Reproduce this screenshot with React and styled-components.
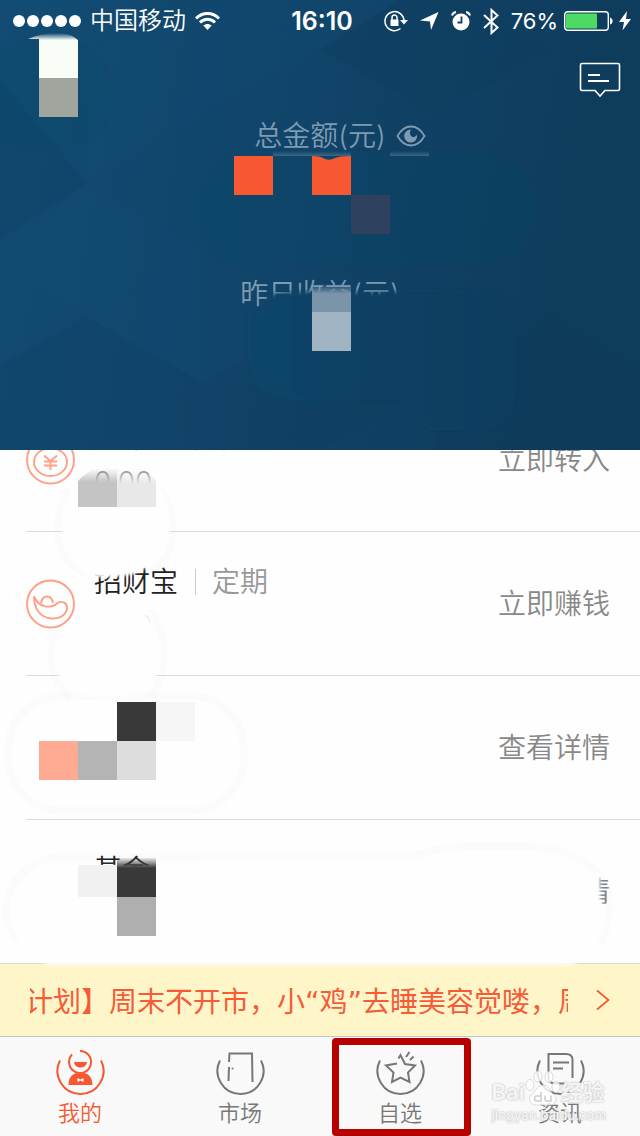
import React from 'react';
import styled, { createGlobalStyle } from 'styled-components';

const GlobalStyle = createGlobalStyle`
  * {
    box-sizing: border-box;
  }

  body {
    margin: 0;
    background: #fefefe;
    font-family: Inter, "Noto Sans CJK SC", sans-serif;
    font-weight: 350;
  }

  button {
    padding: 0;
    border: none;
    background: none;
    font: inherit;
    color: inherit;
    cursor: pointer;
  }
`;

// --- layout ---

const Page = styled.div`
  display: flex;
  flex-direction: column;
  min-height: 100vh;
  overflow: hidden;
`;

const Header = styled.header`
  position: relative;
  z-index: 2;
  min-height: 450px;
  overflow: hidden;
  background: linear-gradient(100deg, #124b73 0%, #114469 45%, #0e3c5d 85%);
`;

const Facets = styled.svg`
  position: absolute;
  inset: 0;
  width: 100%;
  height: 100%;
`;

const HeaderContent = styled.div`
  position: relative;
  display: flex;
  flex-direction: column;
`;

const Overlay = styled.svg`
  position: absolute;
  top: 0;
  left: 0;
  z-index: 1;
  overflow: visible;
  pointer-events: none;
`;

// --- status bar ---

const StatusBar = styled.div`
  display: grid;
  grid-template-columns: 1fr auto 1fr;
  align-items: center;
  height: 42px;
  padding: 0 9px 0 13px;
  color: #fff;
  font-size: 24px;
  line-height: 40px;
`;

const StatusGroup = styled.div`
  display: flex;
  align-items: center;
  justify-content: ${props => (props.$end ? 'flex-end' : 'flex-start')};
  gap: ${props => (props.$end ? '12px' : '9px')};
`;

const Signal = styled.div`
  display: flex;
  gap: 2px;
`;

const Dot = styled.span`
  width: 12px;
  height: 12px;
  border-radius: 50%;
  background: #fff;
`;

const Clock = styled.time`
  font-size: 25px;
  font-weight: 600;
`;

const Power = styled.div`
  display: flex;
  align-items: center;
  gap: 6px;
  font-size: 22px;
  font-weight: 400;
`;

const Toolbar = styled.div`
  display: flex;
  justify-content: flex-end;
  padding: 20px 19px 0;

  button,
  svg {
    display: block;
  }
`;

const Summary = styled.div`
  display: flex;
  flex-direction: column;
  gap: 118px;
  padding-top: 18px;
`;

const SummaryLabel = styled.div`
  display: grid;
  grid-template-columns: 1fr auto 1fr;
  align-items: center;
  column-gap: 10px;
  color: #7d9bb1;
  font-size: 28px;
  line-height: 40px;

  span {
    grid-column: 2;
  }

  button,
  svg {
    display: block;
  }
`;

// --- product list ---

const Products = styled.main`
  position: relative;
  z-index: 1;
  flex: 1;
`;

const Rows = styled.ul`
  margin: -62px 0 0;
  padding: 0 0 0 26px;
  list-style: none;
`;

const Row = styled.li`
  display: flex;
  align-items: center;
  box-sizing: content-box;
  height: 143px;
  padding-right: 30px;
  border-bottom: 1px solid #dcdcdc;
  font-size: 28px;
  line-height: 40px;

  &:last-child {
    border-bottom: none;
  }
`;

const RowIcon = styled.div`
  width: 50px;
  height: 50px;
  margin-right: 18px;
`;

const RowText = styled.div`
  flex: 1;
`;

const RowTitle = styled.div`
  display: flex;
  align-items: center;
  color: #222;
`;

const Kind = styled.span`
  display: flex;
  align-items: center;
  color: #999;

  &::before {
    content: '';
    width: 1px;
    height: 26px;
    margin: 0 16px 0 17px;
    background: #ccc;
  }
`;

const Amount = styled.div`
  min-height: 40px;
  margin-top: 4px;
  color: #888;
`;

const RowAction = styled.button`
  color: #888;
`;

// --- notice ---

const Notice = styled.a`
  display: flex;
  align-items: center;
  height: 74px;
  padding: 0 30px;
  border-top: 1px solid #dcdad0;
  border-bottom: 1px solid #c4c4c4;
  background: #fef6c9;
  color: #f65b38;
  font-size: 28px;
  text-decoration: none;
`;

const Ticker = styled.span`
  display: flex;
  flex: 1;
  overflow: hidden;
  margin-right: 28px;
  font-family: "DejaVu Sans", "Noto Sans CJK SC", sans-serif;
  font-weight: 400;
  white-space: nowrap;

  span {
    margin-left: -5px;
  }
`;

// --- tabs ---

const TabBar = styled.nav`
  position: relative;
  display: grid;
  grid-template-columns: repeat(4, 1fr);
  height: 99px;
  background: #f9f9f9;
`;

const Tab = styled.button`
  position: relative;
  display: flex;
  flex-direction: column;
  align-items: center;
  padding-top: 12px;
  color: ${props => (props.$active ? '#f65932' : '#777')};
  font-size: 22px;
  line-height: 32px;

  svg {
    display: block;
  }
`;

const Highlight = styled.span`
  position: absolute;
  inset: 1px 9px 0 12px;
  border: 7px solid #b70000;
  border-radius: 4px;
`;

const Watermark = styled.div`
  position: absolute;
  right: 34px;
  bottom: 12px;
  color: rgba(255, 255, 255, 0.85);
  font-weight: 700;
  text-shadow: 0 0 2px #bbb, 0 0 1px #ccc;
  pointer-events: none;
`;

const WatermarkBrand = styled.div`
  display: flex;
  align-items: flex-end;
  font-size: 22px;
  line-height: 28px;
`;

const WatermarkSite = styled.div`
  font-size: 13px;
  font-weight: 500;
  line-height: 18px;
`;

// --- icons ---

const WifiIcon = () => (
  <svg width="25" height="20" viewBox="0 0 25 20" fill="none" stroke="#fff" strokeWidth="3">
    <path d="M1 7.5C7.500 .8 17.500 .8 24 7.500" />
    <path d="M5 11.500C9.300 7.300 15.700 7.300 20 11.500" />
    <path d="M12.500 19L8.300 14.600C10.700 12.400 14.300 12.400 16.700 14.600Z" fill="#fff" stroke="none" />
  </svg>
);

const RotationLockIcon = () => (
  <svg width="24" height="22" viewBox="0 0 24 22" fill="none" stroke="#fff">
    <path d="M20 11A9.500 9.500 0 1 0 16.500 18.500" strokeWidth="1.500" />
    <path d="M16 10H24L20 14.500Z" fill="#fff" stroke="none" />
    <rect x="6.500" y="9.500" width="8" height="6.500" rx=".6" fill="#fff" stroke="none" />
    <path d="M8 10V7.600A2.500 2.500 0 0 1 13 7.600V10" strokeWidth="1.500" />
  </svg>
);

const LocationIcon = () => (
  <svg width="19" height="18" viewBox="0 0 19 18" fill="#fff">
    <path d="M18.500 0L11 18L10 9.500L0 8.500Z" />
  </svg>
);

const AlarmIcon = () => (
  <svg width="20" height="20" viewBox="0 0 20 20" fill="none">
    <circle cx="10" cy="11" r="8.500" fill="#fff" />
    <path d="M1 4.500A5 5 0 0 1 5 1M19 4.500A5 5 0 0 0 15 1" stroke="#fff" strokeWidth="2" />
    <path d="M10.500 5.500V11.500H6.500" stroke="#104263" strokeWidth="1.800" />
  </svg>
);

const BluetoothIcon = () => (
  <svg width="16" height="27" viewBox="0 0 16 27" fill="none" stroke="#fff" strokeWidth="2">
    <path d="M1 7L14.500 19.500L8.500 25V2L14.500 7.500L1 20" />
  </svg>
);

const BatteryIcon = () => (
  <svg width="49" height="20" viewBox="0 0 49 20" fill="none">
    <rect x=".7" y=".7" width="43.600" height="18.600" rx="3" stroke="#fff" strokeWidth="1.400" />
    <rect x="2" y="2.500" width="31" height="15" rx="1" fill="#4cd964" />
    <path d="M46 6.500C49.500 7.500 49.500 12.500 46 13.500Z" fill="#fff" />
  </svg>
);

const BoltIcon = () => (
  <svg width="12" height="20" viewBox="0 0 12 20" fill="#fff">
    <path d="M8 0L0 11H5L3.500 19.500L12 8H7Z" />
  </svg>
);

const MessageIcon = () => (
  <svg width="42" height="36" viewBox="0 0 42 36" fill="none" stroke="#fff" strokeWidth="1.600">
    <path d="M3 1.500H39Q40.500 1.500 40.500 3V27Q40.500 28.500 39 28.500H26L21 34L16 28.500H3Q1.500 28.500 1.500 27V3Q1.500 1.500 3 1.500Z" />
    <path d="M9 13H21M9 19H30" strokeWidth="2" />
  </svg>
);

const EyeIcon = () => (
  <svg width="30" height="24" viewBox="0 0 30 24" fill="none">
    <path d="M1.500 12C5.500 5 10 2.500 15 2.500S24.500 5 28.500 12C24.500 19 20 21.500 15 21.500S5.500 19 1.500 12Z" stroke="#7d9bb1" strokeWidth="1.800" />
    <path d="M15 5.500A6.500 6.500 0 1 0 21 10.500C20 13 16.500 14 15 12C13.500 10 13.800 7.500 15 5.500Z" fill="#7d9bb1" />
  </svg>
);

const CoinIcon = () => (
  <svg width="50" height="50" viewBox="0 0 50 50" fill="none" stroke="#ff9f85" strokeWidth="1.900">
    <circle cx="24.500" cy="25" r="23.500" />
    <ellipse cx="24.500" cy="27" rx="16.500" ry="14" />
    <path d="M18 20.500L24.500 26L31 20.500M24.500 26V35M18 26.500H31M18 30.500H31" />
  </svg>
);

const IngotIcon = () => (
  <svg width="50" height="50" viewBox="0 0 50 50" fill="none" stroke="#ff9f85" strokeWidth="1.900">
    <circle cx="24.500" cy="25" r="23.500" />
    <path d="M8 17.500C8 28 13 39 26 39.500C35 39.500 41 35 41 28.500C41 23.500 35.500 21.500 31.500 24C25 30 13 29 8 17.500Z" />
    <path d="M15 24C16 19 18.500 17.500 21 17.500S26 19 27 24" />
  </svg>
);

const TabArc = () => <path d="M4 11.500A23 23 0 1 0 45 11.500" />;

const MineIcon = () => (
  <svg width="49" height="48" viewBox="0 0 49 48" fill="none" stroke="currentColor" strokeWidth="2">
    <TabArc />
    <path d="M24 2A11 11 0 1 1 16 5.500" />
    <path d="M18 13H31A6.500 5.500 0 0 1 18 13Z" fill="currentColor" stroke="none" />
    <path d="M12.500 36C12.500 28 17 24.500 21 24Q24.500 25.500 28 24C32 24.500 36.500 28 36.500 36Z" fill="currentColor" stroke="none" />
    <path d="M21.500 29L24.500 30.500L27.500 29V33L24.500 31.500L21.500 33Z" fill="#fff" stroke="none" />
  </svg>
);

const MarketIcon = () => (
  <svg width="49" height="48" viewBox="0 0 49 48" fill="none" stroke="currentColor" strokeWidth="2">
    <TabArc />
    <path d="M13 13L13.500 4.500H36L36.500 33M13 18L12.500 32" />
    <circle cx="16.500" cy="19.500" r="1" fill="currentColor" stroke="none" />
  </svg>
);

const StarIcon = () => (
  <svg width="49" height="48" viewBox="0 0 49 48" fill="none" stroke="currentColor" strokeWidth="2">
    <TabArc />
    <path d="M22.500 9.500L24.500 6L29 15L39 16.500L32 23.500L33.500 33L24.500 28.500L16 33L17.500 23.500L10 16.500L21 14.500M30 8L33.500 3M34 11L37.500 7.500" />
  </svg>
);

const NewsIcon = () => (
  <svg width="49" height="48" viewBox="0 0 49 48" fill="none" stroke="currentColor" strokeWidth="2">
    <TabArc />
    <path d="M36.500 29V11Q36.500 5 30 5H12.500V29Q12.500 34 19 34.500H31M17 13.500H33M17 19.500H27" />
  </svg>
);

const ChevronIcon = () => (
  <svg width="14" height="22" viewBox="0 0 14 22" fill="none" stroke="#f65932" strokeWidth="1.700">
    <path d="M1 1.500L12.500 11L1 20.500" />
  </svg>
);

const PawIcon = () => (
  <svg width="36" height="36" viewBox="0 0 36 36" fill="#fff" fillOpacity=".8" stroke="#ccc" strokeWidth=".7">
    <ellipse cx="5" cy="15" rx="4" ry="5.500" />
    <ellipse cx="13" cy="6.500" rx="4" ry="5.500" />
    <ellipse cx="24" cy="7" rx="4" ry="5.500" />
    <ellipse cx="31" cy="17" rx="4" ry="5.500" />
    <path d="M18 15C12 16 10 22 6 25C3 29 5 35 11 35H25C31 35 33 29 29 25C25 22 24 15 18 15Z" />
    <path d="M16 22V31H11.500Q9.500 31 9.500 28.500T11.500 26H16M20 25.500V29Q20 31 22 31H26V25.500" fill="none" stroke="#ccc" strokeWidth="1.500" />
  </svg>
);

// --- data ---

const products = [
  { name: '余额宝', kind: '活期', amount: '0.00', action: '立即转入', icon: <CoinIcon /> },
  { name: '招财宝', kind: '定期', amount: '0.00', action: '立即赚钱', icon: <IngotIcon /> },
  { name: '', action: '查看详情' },
  { name: '基金', action: '查看详情' },
];

const tabs = [
  { label: '我的', icon: <MineIcon />, active: true },
  { label: '市场', icon: <MarketIcon /> },
  { label: '自选', icon: <StarIcon />, marked: true },
  { label: '资讯', icon: <NewsIcon /> },
];

// low-poly pattern behind the header
const HeaderFacets = () => (
  <Facets viewBox="0 0 640 450" preserveAspectRatio="none" aria-hidden="true">
    <g fill="#17567f" fillOpacity=".13">
      <path d="M0 0H175L87 48L0 20Z" />
      <path d="M87 48L202 113L87 183Z" />
      <path d="M202 113L320 50L240 0L87 48Z" />
      <path d="M87 183L202 250L87 317L0 262Z" />
      <path d="M202 250V383L87 317Z" />
      <path d="M320 50L400 0H240Z" />
    </g>
    <g fill="#0c3654" fillOpacity=".14">
      <path d="M0 365L87 317L202 383L87 450H0Z" />
      <path d="M202 383L320 450H87Z" />
      <path d="M320 50L436 113L550 50L460 0H400Z" />
      <path d="M320 317L436 383L320 450L202 383Z" />
      <path d="M436 383L550 317L640 370V450H436Z" />
      <path d="M0 80L87 183L0 240Z" />
    </g>
  </Facets>
);

// pixelated blocks that hide the private amounts
const HeaderMosaic = () => (
  <Overlay width="640" height="450" viewBox="0 0 640 450" aria-hidden="true">
    <defs>
      <filter id="soft" x="-20%" y="-20%" width="140%" height="140%">
        <feGaussianBlur stdDeviation="2" />
      </filter>
      <linearGradient id="patch" x1="0" y1="0" x2="1" y2="0">
        <stop offset="0" stopColor="#114569" />
        <stop offset="1" stopColor="#0e3d5e" />
      </linearGradient>
      <linearGradient id="fadeBlue" x1="0" y1="0" x2="0" y2="1">
        <stop offset="0" stopColor="#7a95aa" stopOpacity="0" />
        <stop offset=".35" stopColor="#7a95aa" />
      </linearGradient>
      <linearGradient id="fadeLine" x1="0" y1="0" x2="0" y2="1">
        <stop offset="0" stopColor="#5c809b" stopOpacity="0" />
        <stop offset="1" stopColor="#5c809b" stopOpacity=".6" />
      </linearGradient>
      <linearGradient id="fadeWhite" x1="0" y1="0" x2="0" y2="1">
        <stop offset="0" stopColor="#f8fdf8" stopOpacity="0" />
        <stop offset=".16" stopColor="#f8fdf8" />
      </linearGradient>
    </defs>
    <g fill="#0f4062" fillOpacity=".18" filter="url(#soft)">
      <rect x="-20" y="42" width="130" height="106" rx="50" />
      <rect x="190" y="153" width="346" height="112" rx="54" />
    </g>
    <path d="M268 310V296Q285 291 312 292H352Q385 294 406 290H470Q515 290 515 330V390Q515 430 475 430H430L400 400H300Q248 400 248 350V312Z" fill="url(#patch)" filter="url(#soft)" />
    <path d="M28 39Q40 33 60 33Q72 34 78 40V78H39V39Z" fill="url(#fadeWhite)" />
    <rect x="39" y="78" width="39" height="39" fill="#a0a59e" />
    <path d="M234 156H273V195H234Z" fill="#f65932" />
    <path d="M312 156Q321 156 325 159Q330 161 335 158Q339 156 351 156V195H312Z" fill="#f65932" />
    <path d="M273 151H351V156H273ZM390 151H429V156H390Z" fill="url(#fadeLine)" />
    <rect x="351" y="195" width="39" height="39" fill="#2e425f" />
    <rect x="312" y="284" width="39" height="28" fill="url(#fadeBlue)" />
    <rect x="312" y="312" width="39" height="39" fill="#a0b3c2" />
  </Overlay>
);

const ListMosaic = () => (
  <Overlay width="640" height="514" viewBox="0 450 640 514" aria-hidden="true">
    <defs>
      <filter id="smudge" x="-10%" y="-10%" width="120%" height="120%">
        <feGaussianBlur stdDeviation="1.500" />
      </filter>
      <linearGradient id="fadeGray" gradientUnits="userSpaceOnUse" x1="0" y1="468" x2="0" y2="482">
        <stop offset="0" stopColor="#c4c4c4" stopOpacity="0" />
        <stop offset="1" stopColor="#c4c4c4" />
      </linearGradient>
      <linearGradient id="fadeLight" gradientUnits="userSpaceOnUse" x1="0" y1="468" x2="0" y2="484">
        <stop offset="0" stopColor="#e8e8e8" stopOpacity="0" />
        <stop offset="1" stopColor="#e8e8e8" />
      </linearGradient>
      <linearGradient id="fadeDark" gradientUnits="userSpaceOnUse" x1="0" y1="857" x2="0" y2="868">
        <stop offset="0" stopColor="#393939" stopOpacity="0" />
        <stop offset="1" stopColor="#393939" />
      </linearGradient>
    </defs>
    {/* faint outlines around the wiped areas */}
    <g fill="none" stroke="#000" strokeOpacity=".01" strokeWidth="8">
      <path d="M70 490Q56 510 58 535Q62 565 88 574M160 490Q174 510 173 530Q172 560 148 574" />
      <path d="M70 612Q51 635 51 655Q51 680 70 697M150 610Q164 630 164 655Q164 680 150 697" />
      <rect x="8" y="696" width="236" height="115" rx="54" />
      <path d="M20 940Q8 930 6 912Q8 865 60 857H410Q440 846 480 846H520Q590 848 608 890Q612 920 600 945" />
    </g>
    <g fill="#fefefe" filter="url(#smudge)">
      <path d="M78 484H156Q170 500 170 530Q165 560 134 574Q112 579 88 576Q62 560 62 525Q62 500 78 484Z" />
      <path d="M72 624Q90 600 107 602Q136 604 144 614Q152 618 154 628Q160 640 160 655Q160 698 107 698Q55 698 55 655Q55 640 72 624Z" />
      <path d="M90 605H142V636H90Z" />
      <path d="M62 866H200V861H540Q580 862 600 876V902L606 906Q608 930 590 955Q580 965 560 965H48Q12 950 10 912Q12 870 62 866Z" />
    </g>
    <path d="M78 481Q88 470 98 468H117V507H78Z" fill="url(#fadeGray)" />
    <path d="M117 468H138Q150 472 156 481V507H117Z" fill="url(#fadeLight)" />
    <path d="M136 608H154V620H136Z" fill="#fefefe" fillOpacity=".6" />
    <rect x="117" y="702" width="39" height="39" fill="#393939" />
    <rect x="156" y="702" width="39" height="39" fill="#f6f6f6" />
    <rect x="39" y="741" width="39" height="39" fill="#ffaa92" />
    <rect x="78" y="741" width="39" height="39" fill="#b4b4b4" />
    <rect x="117" y="741" width="39" height="39" fill="#ddd" />
    <rect x="78" y="865" width="39" height="32" fill="#f1f1f1" />
    <rect x="117" y="858" width="39" height="39" fill="url(#fadeDark)" />
    <rect x="117" y="897" width="39" height="39" fill="#afafaf" />
  </Overlay>
);

function App() {
  return (
    <Page>
      <GlobalStyle />
      <Header>
        <HeaderFacets />
        <HeaderContent>
          <StatusBar>
            <StatusGroup>
              <Signal>
                {[0, 1, 2, 3, 4].map(i => <Dot key={i} />)}
              </Signal>
              <span>中国移动</span>
              <WifiIcon />
            </StatusGroup>
            <Clock>16:10</Clock>
            <StatusGroup $end>
              <RotationLockIcon />
              <LocationIcon />
              <AlarmIcon />
              <BluetoothIcon />
              <Power>
                <span>76%</span>
                <BatteryIcon />
                <BoltIcon />
              </Power>
            </StatusGroup>
          </StatusBar>
          <Toolbar>
            <button aria-label="消息"><MessageIcon /></button>
          </Toolbar>
          <Summary>
            <SummaryLabel>
              <span>总金额(元)</span>
              <button aria-label="显示金额"><EyeIcon /></button>
            </SummaryLabel>
            <SummaryLabel>
              <span>昨日收益(元)</span>
            </SummaryLabel>
          </Summary>
        </HeaderContent>
        <HeaderMosaic />
      </Header>

      <Products>
        <Rows>
          {products.map((item, i) => (
            <Row key={i}>
              <RowIcon>{item.icon}</RowIcon>
              <RowText>
                <RowTitle>
                  {item.name}
                  {item.kind && <Kind>{item.kind}</Kind>}
                </RowTitle>
                <Amount>{item.amount}</Amount>
              </RowText>
              <RowAction>{item.action}</RowAction>
            </Row>
          ))}
        </Rows>
        <ListMosaic />
      </Products>

      <Notice href="#notice">
        <Ticker>
          <span>计划】周末不开市，小“鸡”去睡美容觉喽，周</span>
        </Ticker>
        <ChevronIcon />
      </Notice>

      <TabBar>
        {tabs.map(tab => (
          <Tab key={tab.label} $active={tab.active}>
            {tab.icon}
            {tab.label}
            {tab.marked && <Highlight />}
          </Tab>
        ))}
        <Watermark>
          <WatermarkBrand>
            <span>Bai</span>
            <PawIcon />
            <span>经验</span>
          </WatermarkBrand>
          <WatermarkSite>jingyan.baidu.com</WatermarkSite>
        </Watermark>
      </TabBar>
    </Page>
  );
}

export default App;
